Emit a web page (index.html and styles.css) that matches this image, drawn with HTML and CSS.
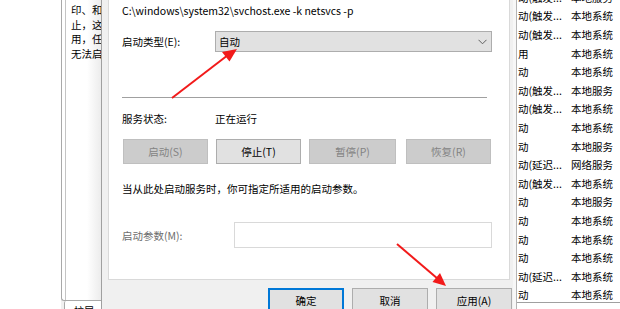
FILE: index.html
```html
<!DOCTYPE html>
<html lang="zh-CN">
<head>
<meta charset="utf-8">
<link rel="stylesheet" href="styles.css">
</head>
<body>
<div class="screen">
  <div class="blank"></div>
  <div class="side">
    <div class="side-inner">
      <div class="side-text">
        <div>印、和</div>
        <div>止，这</div>
        <div>用，任</div>
        <div>无法启</div>
      </div>
    </div>
    <div class="side-tab">扩展</div>
  </div>
  <div class="dialog">
    <div class="page">
      <div class="row path">C:\windows\system32\svchost.exe -k netsvcs -p</div>
      <div class="row type-row">
        <div class="label">启动类型(E):</div>
        <div class="combo">
          <span>自动</span>
          <svg class="chev" width="9" height="6" viewBox="0 0 9 6"><path d="M0.5 0.8 L4.5 4.8 L8.5 0.8" fill="none" stroke="#5f5f5f" stroke-width="1"/></svg>
        </div>
      </div>
      <div class="sep"></div>
      <div class="row status-row">
        <div class="label">服务状态:</div>
        <div>正在运行</div>
      </div>
      <div class="btn-row">
        <div class="btn disabled w85">启动(S)</div>
        <div class="btn w85">停止(T)</div>
        <div class="btn disabled w87">暂停(P)</div>
        <div class="btn disabled w85 gap-xl">恢复(R)</div>
      </div>
      <div class="row hint">当从此处启动服务时，你可指定所适用的启动参数。</div>
      <div class="param-row">
        <div class="label param-label">启动参数(M):</div>
        <div class="input"></div>
      </div>
    </div>
    <div class="footer">
      <div class="btn fbtn focus">确定</div>
      <div class="btn fbtn">取消</div>
      <div class="btn fbtn">应用(A)</div>
    </div>
  </div>
  <div class="divider"></div>
  <div class="list">
    <div class="rows">
      <div class="li"><span class="c1">动(触发...</span><span>本地服务</span></div>
      <div class="li"><span class="c1">动(触发...</span><span>本地系统</span></div>
      <div class="li"><span class="c1">动(触发...</span><span>本地系统</span></div>
      <div class="li"><span class="c1">用</span><span>本地系统</span></div>
      <div class="li"><span class="c1">动</span><span>本地系统</span></div>
      <div class="li"><span class="c1">动(触发...</span><span>本地服务</span></div>
      <div class="li"><span class="c1">动(触发...</span><span>本地系统</span></div>
      <div class="li"><span class="c1">动</span><span>本地系统</span></div>
      <div class="li"><span class="c1">动</span><span>本地服务</span></div>
      <div class="li"><span class="c1">动(延迟...</span><span>网络服务</span></div>
      <div class="li"><span class="c1">动(触发...</span><span>本地系统</span></div>
      <div class="li"><span class="c1">动</span><span>本地服务</span></div>
      <div class="li"><span class="c1">动</span><span>本地系统</span></div>
      <div class="li"><span class="c1">动</span><span>本地系统</span></div>
      <div class="li"><span class="c1">动</span><span>本地系统</span></div>
      <div class="li"><span class="c1">动(延迟...</span><span>本地系统</span></div>
      <div class="li"><span class="c1">动</span><span>本地系统</span></div>
    </div>
  </div>
  <svg class="arrows" width="620" height="309" viewBox="0 0 620 309">
    <line x1="172" y1="98" x2="228" y2="55" stroke="#f21a1a" stroke-width="2"/>
    <polygon points="237,49 229.5,61.5 222,52" fill="#f21a1a"/>
    <line x1="397" y1="244" x2="438" y2="279" stroke="#f21a1a" stroke-width="2"/>
    <polygon points="446,286 432.5,282 440,273" fill="#f21a1a"/>
  </svg>
</div>
</body>
</html>
```
FILE: styles.css
```css
html, body {
  margin: 0;
  padding: 0;
}
body {
  width: 620px;
  height: 309px;
  overflow: hidden;
  background: #ffffff;
  font-family: "Noto Sans CJK SC", "Noto Sans", sans-serif;
  font-size: 10.5px;
  color: #000;
}
.screen {
  position: relative;
  display: flex;
  width: 620px;
  height: 309px;
  overflow: hidden;
}
.blank {
  width: 61px;
  flex: none;
  background: #fff;
}
.side {
  width: 40px;
  flex: none;
  display: flex;
  flex-direction: column;
  background: #f0f0f0;
}
.side-inner {
  height: 301px;
  flex: none;
  border-left: 1px solid #a9a9a9;
  border-bottom: 1px solid #a9a9a9;
  border-bottom-left-radius: 3px;
  box-sizing: border-box;
  background: #fff;
  display: flex;
  overflow: hidden;
}
.side-text {
  flex: 1;
  margin-left: 3px;
  border-left: 1px solid #c4c4c4;
  padding-left: 5px;
  padding-top: 3px;
  line-height: 14.7px;
  white-space: nowrap;
  overflow: hidden;
  background: linear-gradient(to right, #ffffff 60%, #ececec 100%);
}
.side-tab {
  margin-left: 3px;
  height: 8px;
  border-left: 1px solid #a9a9a9;
  border-top-left-radius: 2px;
  background: #fff;
  padding-left: 9px;
  padding-top: 4px;
  font-size: 10px;
  line-height: 12px;
  overflow: hidden;
}
.dialog {
  width: 412px;
  flex: none;
  background: #f0f0f0;
  border-left: 1px solid #a0a0a0;
  box-sizing: border-box;
}
.page {
  margin-left: 6px;
  width: 402px;
  height: 280px;
  box-sizing: border-box;
  background: #fff;
  border: 1px solid #d9d9d9;
  border-top: none;
  padding-left: 13px;
}
.row {
  display: flex;
  align-items: center;
  white-space: nowrap;
}
.path {
  height: 20px;
}
.type-row {
  margin-top: 11px;
  height: 21px;
}
.label {
  width: 93px;
  flex: none;
}
.combo {
  width: 277px;
  height: 21px;
  box-sizing: border-box;
  background: #e1e1e1;
  border: 1px solid #adadad;
  display: flex;
  align-items: center;
  justify-content: space-between;
  padding-left: 3px;
  padding-right: 4px;
}
.chev {
  display: block;
}
.sep {
  margin-top: 45px;
  width: 365px;
  height: 1px;
  background: #a0a0a0;
}
.status-row {
  margin-top: 10px;
  height: 20px;
}
.btn-row {
  margin-top: 11px;
  margin-left: 1px;
  display: flex;
  gap: 8px;
}
.btn {
  height: 25px;
  box-sizing: border-box;
  background: #e1e1e1;
  border: 1px solid #adadad;
  display: flex;
  align-items: center;
  justify-content: center;
  white-space: nowrap;
}
.btn.disabled {
  background: #cccccc;
  border-color: #bfbfbf;
  color: #838383;
}
.w85 { width: 85px; }
.w87 { width: 87px; }
.gap-xl { margin-left: 2px; }
.hint {
  margin-top: 14px;
  height: 20px;
}
.param-row {
  margin-top: 24px;
  display: flex;
  align-items: center;
}
.param-label {
  width: 112px;
  color: #6d6d6d;
}
.input {
  width: 258px;
  height: 26px;
  box-sizing: border-box;
  border: 1px solid #d9d9d9;
  background: #fff;
}
.footer {
  margin-top: 8px;
  margin-left: 166px;
  display: flex;
  gap: 8px;
}
.fbtn {
  width: 76px;
  height: 26px;
  padding-bottom: 2px;
}
.fbtn.focus {
  border: 2px solid #0078d7;
}
.divider {
  width: 3px;
  flex: none;
  background: #f7f7f7;
  border-right: 1px solid #b4b4b4;
}
.list {
  flex: 1;
  height: 302px;
  border-bottom: 1px solid #a0a0a0;
  background: #fff;
  overflow: hidden;
  padding-left: 1px;
}
.rows {
  margin-top: -12px;
}
.li {
  height: 18.6px;
  display: flex;
  align-items: center;
  white-space: nowrap;
}
.c1 {
  width: 53px;
  flex: none;
  overflow: hidden;
}
.arrows {
  position: absolute;
  left: 0;
  top: 0;
  pointer-events: none;
}
```
